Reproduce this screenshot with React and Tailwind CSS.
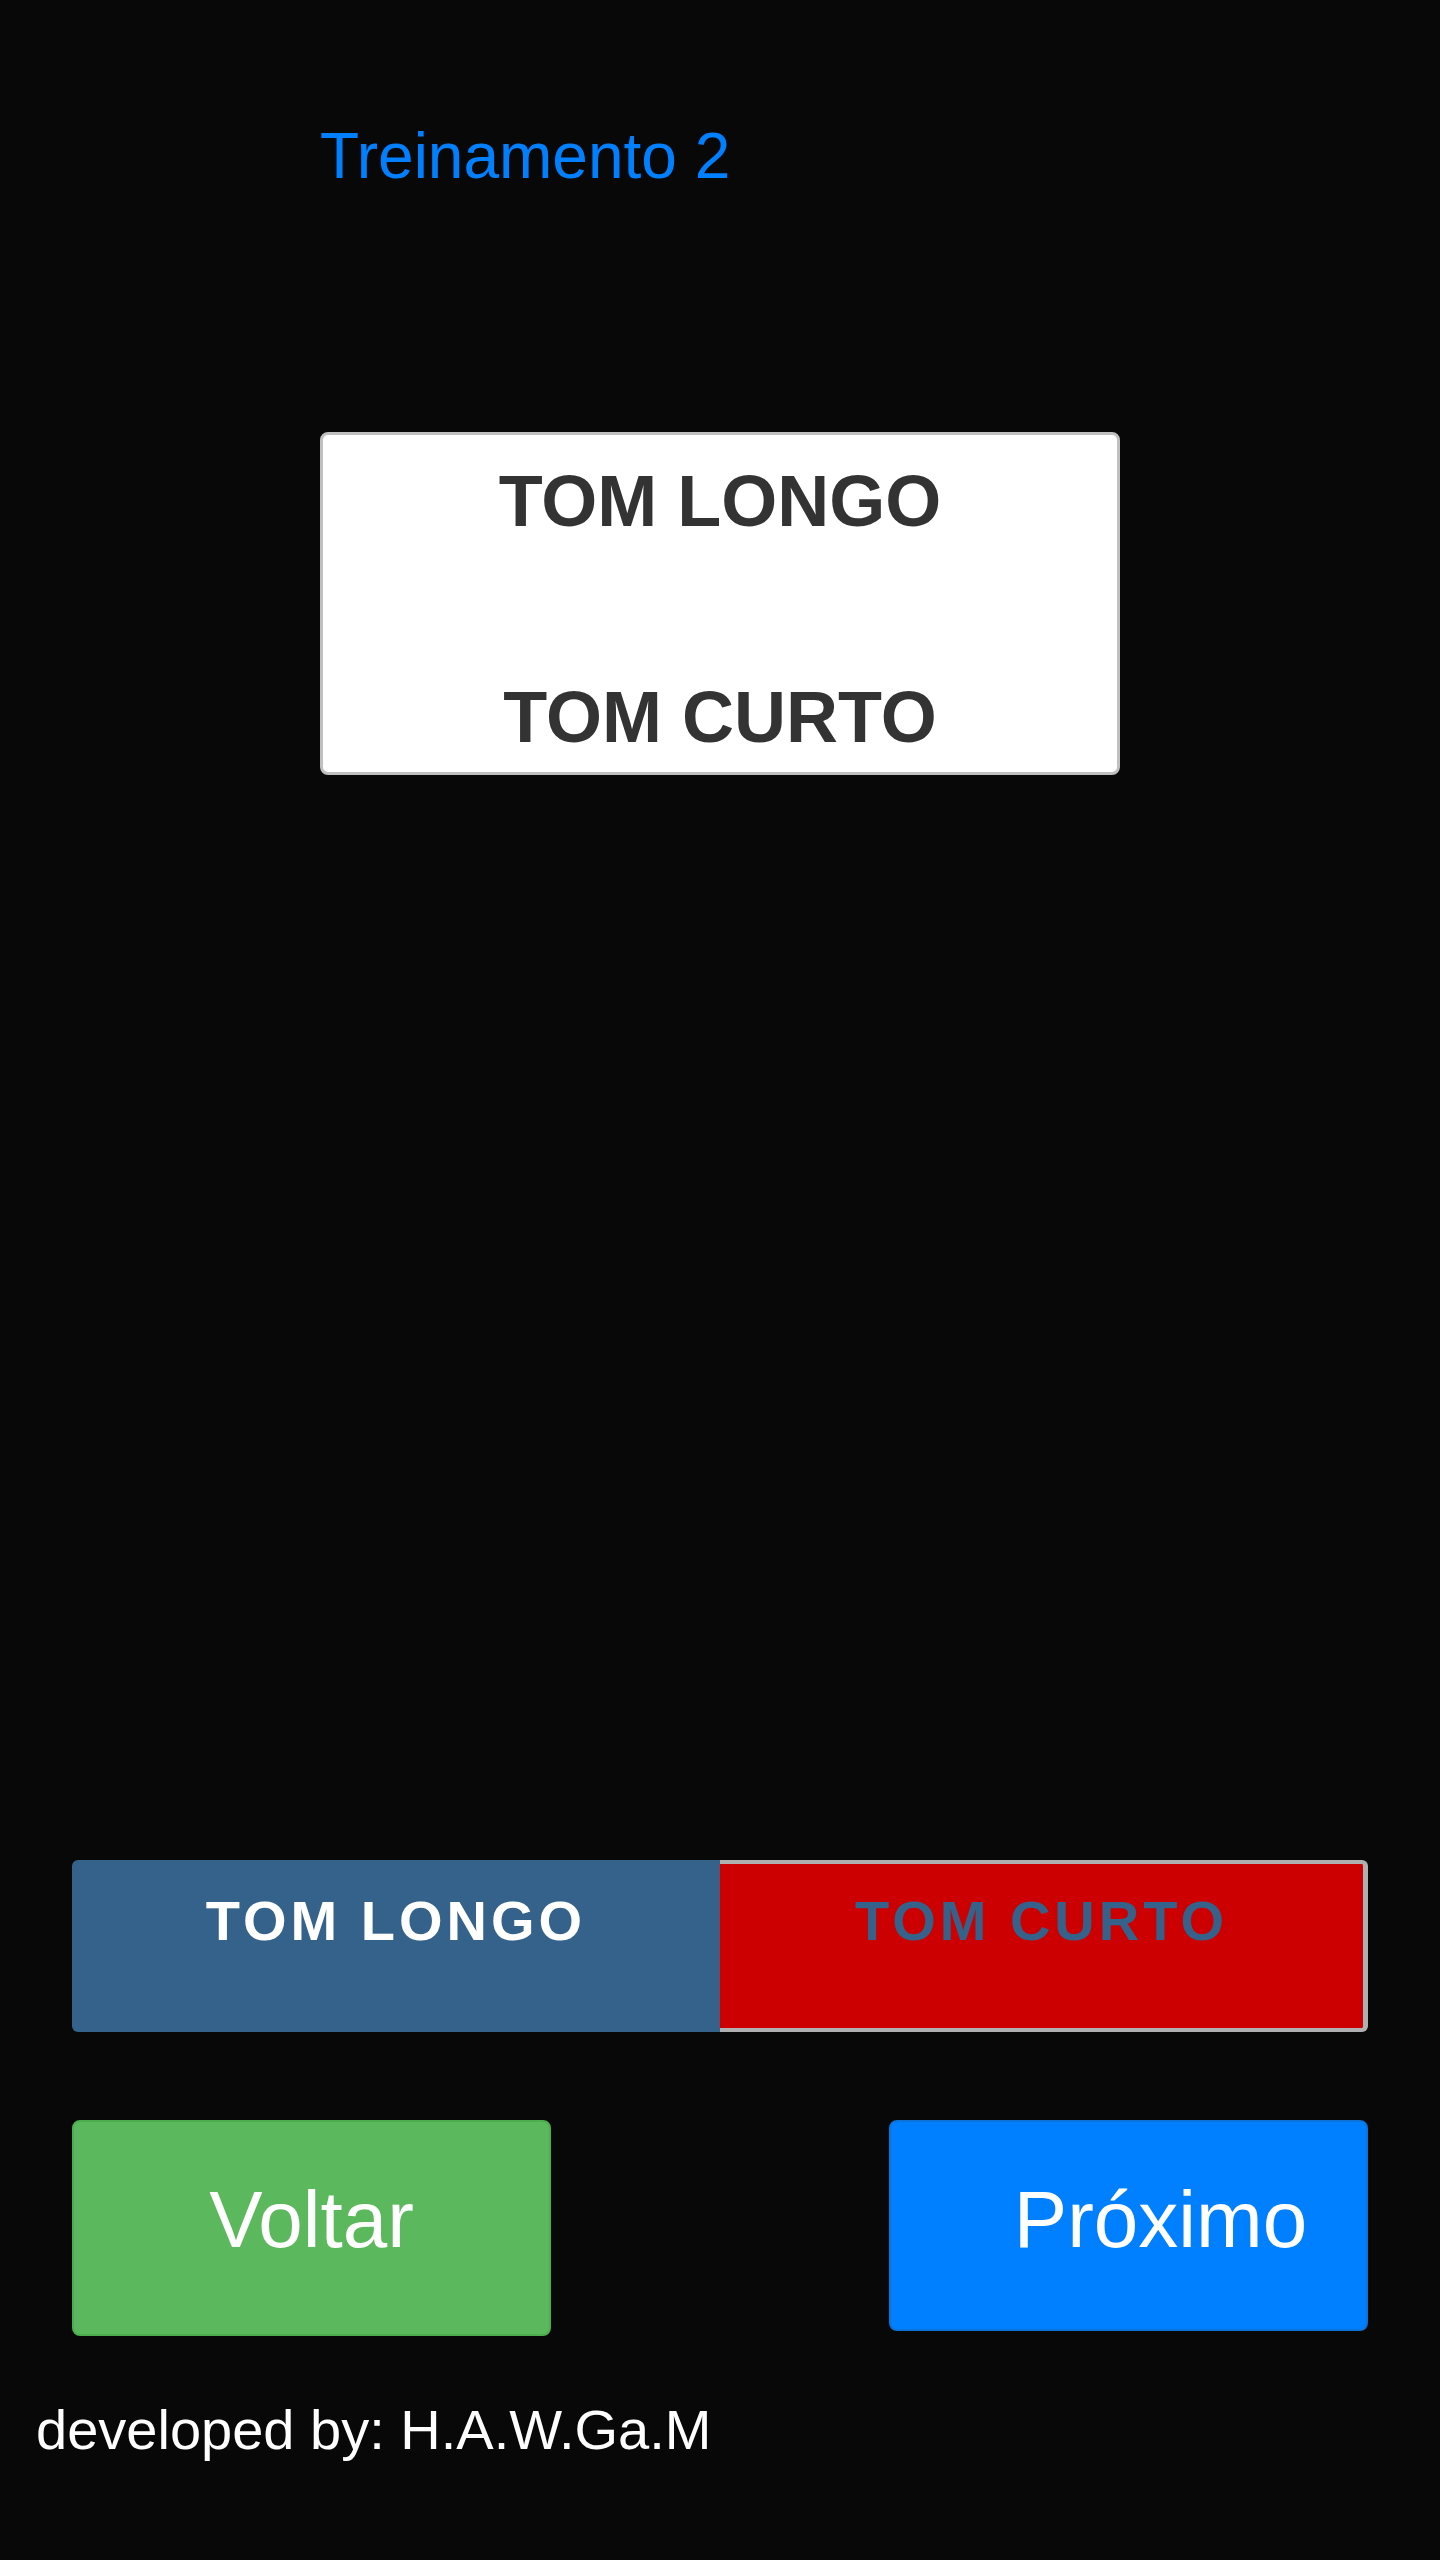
import React from 'react';

const font = { fontFamily: '"Liberation Sans", Arial, sans-serif' };

const ToneCard = () => (
  <div className="ml-[320px] mt-[244px] flex h-[343px] w-[800px] flex-col items-center rounded-lg border-[3px] border-[#c0c0c0] bg-white pt-[30px]">
    <span className="text-[72px] font-bold leading-none text-[#333333]">TOM LONGO</span>
    <span className="mt-[144px] text-[72px] font-bold leading-none text-[#333333]">TOM CURTO</span>
  </div>
);

const ToneBar = () => (
  <div className="mx-[72px] mt-[1085px] flex h-[172px]">
    <div className="flex w-1/2 justify-center rounded-l-md bg-[#34628a] pt-[33px]">
      <span className="text-[56px] font-bold leading-none tracking-[4px] text-white">TOM LONGO</span>
    </div>
    <div className="flex w-1/2 justify-center rounded-r-md border-y-4 border-r-[5px] border-[#b0b0b0] bg-[#cc0000] pt-[29px]">
      <span className="text-[56px] font-bold leading-none tracking-[4px] text-[#34628a]">TOM CURTO</span>
    </div>
  </div>
);

export default function App() {
  return (
    <div className="min-h-screen w-full bg-[#080808]" style={font}>
      <div className="pl-[320px] pt-[124px]">
        <h1 className="text-[64px] font-normal leading-none text-[#0080ff]">Treinamento 2</h1>
      </div>

      <ToneCard />

      <ToneBar />

      <div className="mt-[88px] flex items-start justify-between px-[72px]">
        <button className="flex h-[216px] w-[479px] justify-center rounded-lg border-2 border-[#4cae4c] bg-[#5cb85c] pt-[58px]">
          <span className="text-[80px] leading-none text-white">Voltar</span>
        </button>
        <button className="flex h-[211px] w-[479px] justify-center rounded-lg border-2 border-[#0a74da] bg-[#0080ff] pl-[64px] pt-[58px]">
          <span className="text-[80px] leading-none text-white">Próximo</span>
        </button>
      </div>

      <p className="mt-[66px] pl-[36px] text-[56px] leading-none text-white">developed by: H.A.W.Ga.M</p>
    </div>
  );
}
